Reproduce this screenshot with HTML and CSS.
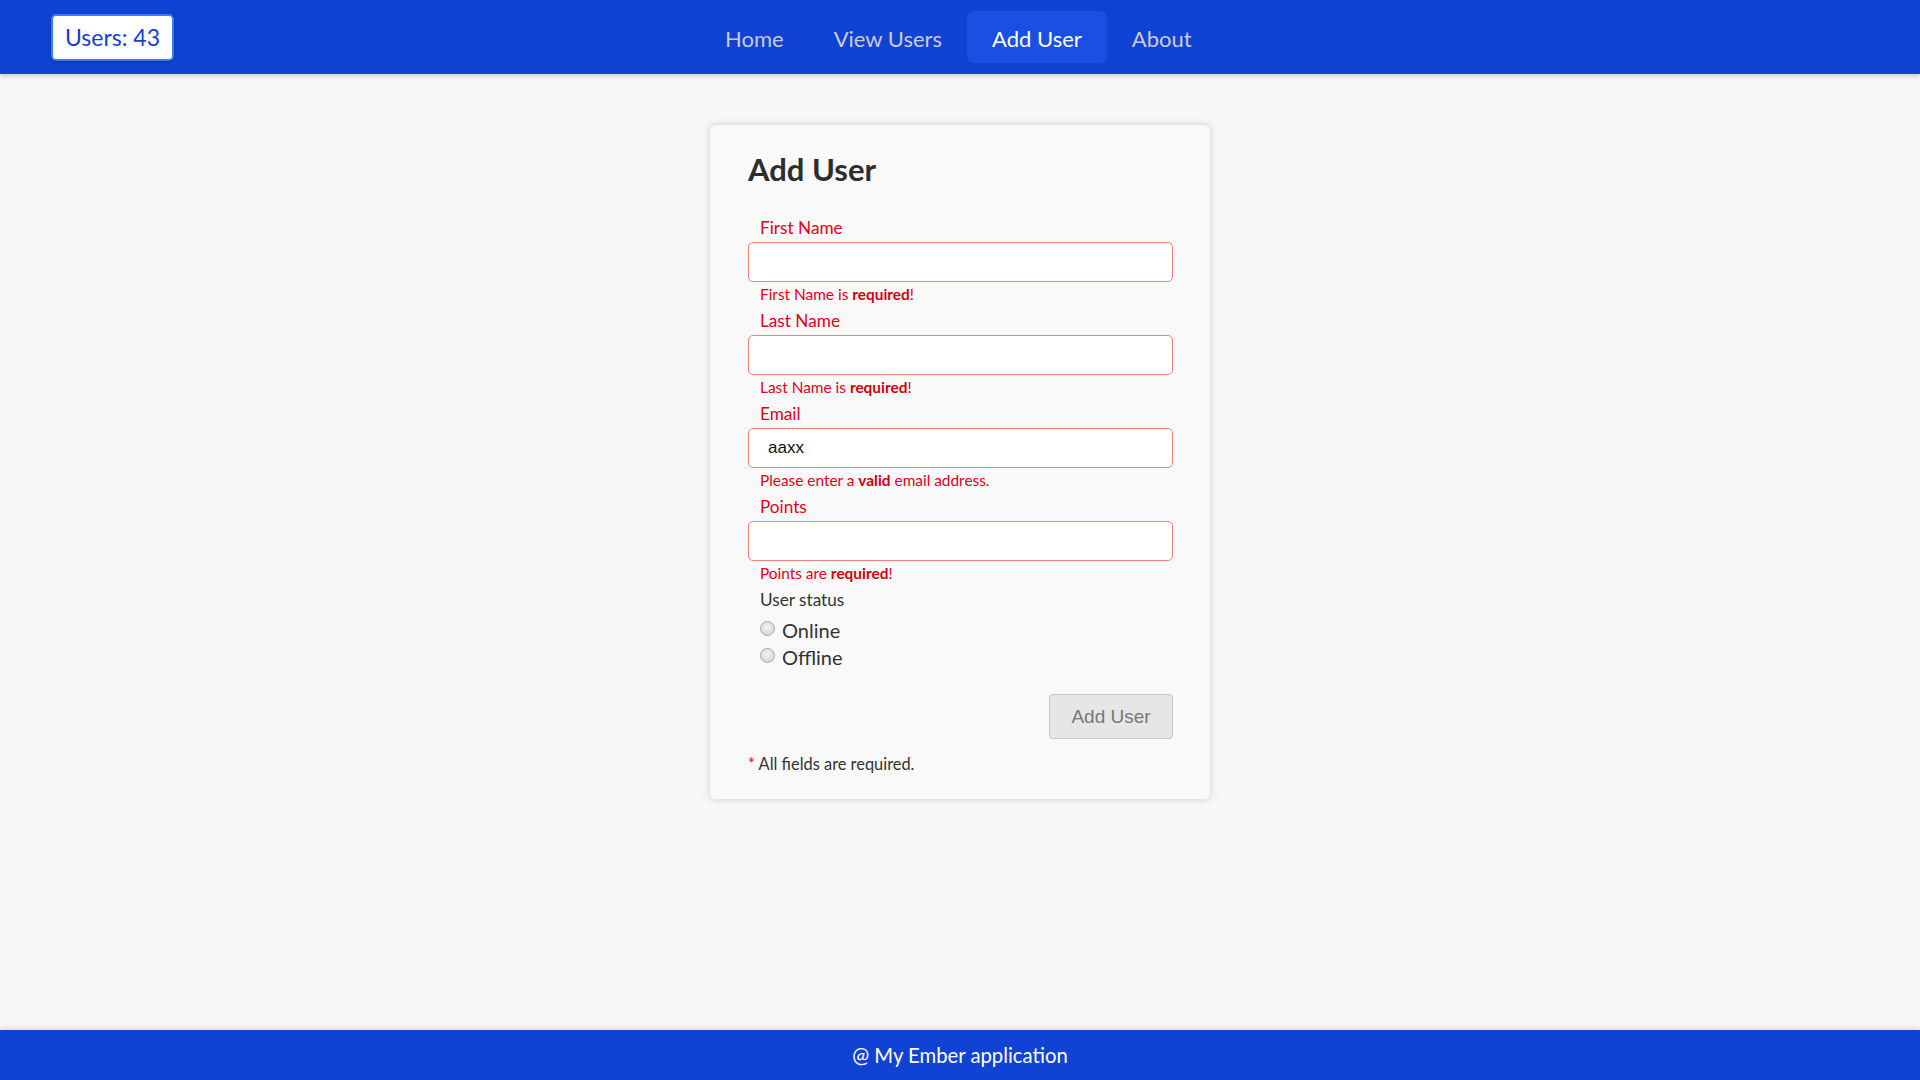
FILE: index.html
```html
<!DOCTYPE html>
<html lang="en">
<head>
<meta charset="utf-8">
<title>Add User</title>
<link rel="stylesheet" href="styles.css">
</head>
<body>
<div class="app">
  <header class="topbar">
    <div class="badge">Users: 43</div>
    <nav class="nav">
      <a class="nav-item" href="#">Home</a>
      <a class="nav-item" href="#">View Users</a>
      <a class="nav-item active" href="#">Add User</a>
      <a class="nav-item" href="#">About</a>
    </nav>
  </header>

  <main class="main">
    <form class="card">
      <h2 class="title">Add User</h2>

      <div class="field">
        <label class="label error-label">First Name</label>
        <input class="input" type="text" value="">
        <div class="error">First Name is <b>required</b>!</div>
      </div>

      <div class="field">
        <label class="label error-label">Last Name</label>
        <input class="input" type="text" value="">
        <div class="error">Last Name is <b>required</b>!</div>
      </div>

      <div class="field">
        <label class="label error-label">Email</label>
        <input class="input" type="text" value="aaxx">
        <div class="error">Please enter a <b>valid</b> email address.</div>
      </div>

      <div class="field">
        <label class="label error-label">Points</label>
        <input class="input" type="text" value="">
        <div class="error">Points are <b>required</b>!</div>
      </div>

      <div class="status">
        <div class="label">User status</div>
        <label class="radio-row"><input class="radio" type="radio" name="status"><span>Online</span></label>
        <label class="radio-row"><input class="radio" type="radio" name="status"><span>Offline</span></label>
      </div>

      <div class="actions">
        <button class="btn" type="button">Add User</button>
      </div>

      <p class="note"><span class="star">*</span> All fields are required.</p>
    </form>
  </main>

  <footer class="footer">@ My Ember application</footer>
</div>
</body>
</html>
```

FILE: styles.css
```css
* { box-sizing: border-box; }

html, body {
  margin: 0;
  padding: 0;
}

body {
  background: #f8f8f8;
  font-family: Lato, "Open Sans", sans-serif;
  color: #333;
}

.app {
  min-height: 100vh;
  display: flex;
  flex-direction: column;
}

.topbar {
  height: 74px;
  background: #1043d4;
  display: flex;
  align-items: center;
  padding: 0 51px;
  box-shadow: 0 2px 5px rgba(0, 0, 0, 0.18);
  position: relative;
  z-index: 1;
}

.badge {
  height: 47px;
  padding: 0 12px;
  display: flex;
  align-items: center;
  background: #fff;
  border: 2px solid #3f7bf7;
  border-radius: 5px;
  color: #1a3fcf;
  font-size: 23px;
  box-shadow: 0 1px 3px rgba(0, 0, 0, 0.25);
}

.nav {
  display: flex;
  align-items: center;
  margin-left: 526px;
}

.nav-item {
  display: block;
  height: 52px;
  line-height: 49px;
  padding: 3px 25px 0 25px;
  font-size: 22px;
  color: #c9ccd8;
  text-decoration: none;
  border-radius: 7px;
}

.nav-item.active {
  background: #1b4fe2;
  color: #fff;
}

.main {
  flex: 1;
  display: flex;
  justify-content: center;
  align-items: flex-start;
  padding-top: 51px;
}

.card {
  width: 500px;
  background: #f9f9f9;
  border-radius: 6px;
  box-shadow: 0 0 8px rgba(0, 0, 0, 0.18);
  padding: 25px 37px 23px 38px;
  display: flex;
  flex-direction: column;
}

.title {
  margin: 0 0 25px 0;
  font-size: 31px;
  line-height: 38px;
  font-weight: 700;
  color: #2d2d2d;
}

.field {
  display: flex;
  flex-direction: column;
}

.label {
  display: block;
  font-size: 17.2px;
  line-height: 29px;
  padding-left: 12px;
  color: #333;
}

.error-label {
  color: #e3001b;
}

.input {
  width: 100%;
  height: 40px;
  border: 1px solid #f08080;
  border-radius: 5px;
  background: #fff;
  padding: 0 19px;
  font-family: "Liberation Sans", Arial, sans-serif;
  font-size: 17px;
  color: #111;
  outline: none;
}

.error {
  font-size: 15.4px;
  line-height: 24px;
  padding-left: 12px;
  color: #e3001b;
}

.error b {
  font-weight: 700;
  color: #d00010;
}

.status {
  display: flex;
  flex-direction: column;
}

.status .label {
  margin-bottom: 2px;
}

.radio-row {
  display: flex;
  align-items: center;
  height: 27px;
  padding-left: 12px;
  font-size: 20px;
  color: #333;
}

.radio {
  appearance: none;
  -webkit-appearance: none;
  width: 15px;
  height: 15px;
  margin: 0 7px 0 0;
  border-radius: 50%;
  border: 1px solid #a9a9a9;
  background: radial-gradient(circle at 45% 40%, #f4f4f4 0%, #dcdcdc 60%, #cfcfcf 100%);
  position: relative;
  top: -1px;
}

.actions {
  display: flex;
  justify-content: flex-end;
  margin-top: 24px;
}

.btn {
  width: 124px;
  height: 45px;
  background: #e6e6e6;
  border: 1px solid #c6c6c6;
  border-radius: 4px;
  color: #777;
  font-family: "Liberation Sans", Arial, sans-serif;
  font-size: 19px;
  padding: 0;
}

.note {
  margin: 13px 0 0 0;
  font-size: 16.4px;
  line-height: 24px;
  color: #333;
}

.star {
  color: #e3001b;
}

.footer {
  height: 50px;
  background: #1043d4;
  color: #fff;
  font-size: 20.3px;
  display: flex;
  align-items: center;
  justify-content: center;
  box-shadow: 0 -2px 5px rgba(0, 0, 0, 0.12);
}
```
